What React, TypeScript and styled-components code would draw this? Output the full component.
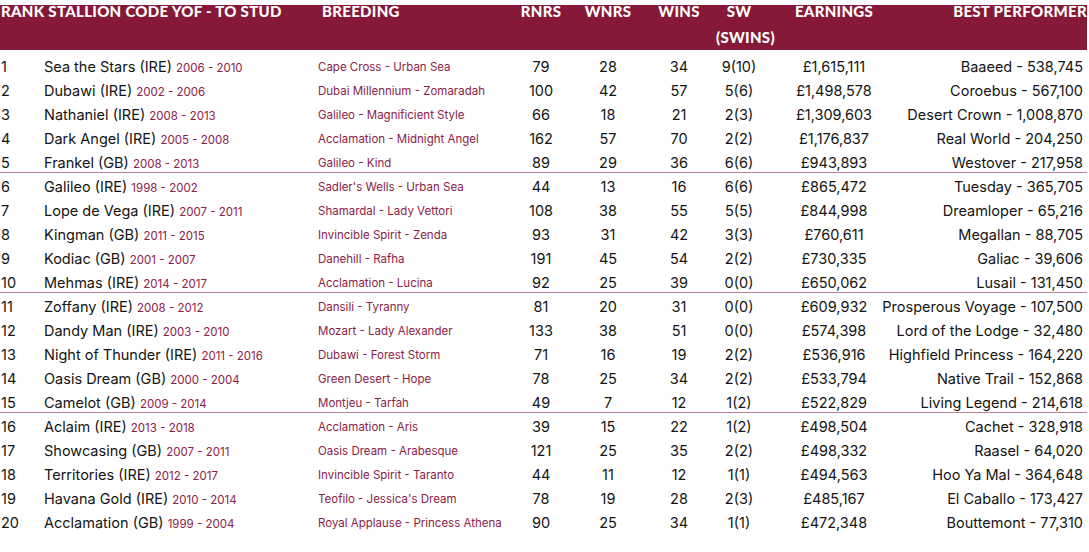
import styled, {createGlobalStyle} from 'styled-components';

const GlobalStyle = createGlobalStyle`
    body {
        margin: 0;
        background: #ffffff;
        font-family: Inter, Lato, sans-serif;
    }
`;

const maroon = '#861838';
const columns = '44px 274px 190px 66px 68px 74px 46px 144px 181px';

interface Stallion {
    rank: number;
    name: string;
    years: string;
    breeding: string;
    runners: number;
    winners: number;
    wins: number;
    sw: string;
    earnings: string;
    best: string;
}

const stallions: Stallion[] = [
    {rank: 1, name: 'Sea the Stars (IRE)', years: '2006 - 2010', breeding: 'Cape Cross - Urban Sea', runners: 79, winners: 28, wins: 34, sw: '9(10)', earnings: '£1,615,111', best: 'Baaeed - 538,745'},
    {rank: 2, name: 'Dubawi (IRE)', years: '2002 - 2006', breeding: 'Dubai Millennium - Zomaradah', runners: 100, winners: 42, wins: 57, sw: '5(6)', earnings: '£1,498,578', best: 'Coroebus - 567,100'},
    {rank: 3, name: 'Nathaniel (IRE)', years: '2008 - 2013', breeding: 'Galileo - Magnificient Style', runners: 66, winners: 18, wins: 21, sw: '2(3)', earnings: '£1,309,603', best: 'Desert Crown - 1,008,870'},
    {rank: 4, name: 'Dark Angel (IRE)', years: '2005 - 2008', breeding: 'Acclamation - Midnight Angel', runners: 162, winners: 57, wins: 70, sw: '2(2)', earnings: '£1,176,837', best: 'Real World - 204,250'},
    {rank: 5, name: 'Frankel (GB)', years: '2008 - 2013', breeding: 'Galileo - Kind', runners: 89, winners: 29, wins: 36, sw: '6(6)', earnings: '£943,893', best: 'Westover - 217,958'},
    {rank: 6, name: 'Galileo (IRE)', years: '1998 - 2002', breeding: "Sadler's Wells - Urban Sea", runners: 44, winners: 13, wins: 16, sw: '6(6)', earnings: '£865,472', best: 'Tuesday - 365,705'},
    {rank: 7, name: 'Lope de Vega (IRE)', years: '2007 - 2011', breeding: 'Shamardal - Lady Vettori', runners: 108, winners: 38, wins: 55, sw: '5(5)', earnings: '£844,998', best: 'Dreamloper - 65,216'},
    {rank: 8, name: 'Kingman (GB)', years: '2011 - 2015', breeding: 'Invincible Spirit - Zenda', runners: 93, winners: 31, wins: 42, sw: '3(3)', earnings: '£760,611', best: 'Megallan - 88,705'},
    {rank: 9, name: 'Kodiac (GB)', years: '2001 - 2007', breeding: 'Danehill - Rafha', runners: 191, winners: 45, wins: 54, sw: '2(2)', earnings: '£730,335', best: 'Galiac - 39,606'},
    {rank: 10, name: 'Mehmas (IRE)', years: '2014 - 2017', breeding: 'Acclamation - Lucina', runners: 92, winners: 25, wins: 39, sw: '0(0)', earnings: '£650,062', best: 'Lusail - 131,450'},
    {rank: 11, name: 'Zoffany (IRE)', years: '2008 - 2012', breeding: 'Dansili - Tyranny', runners: 81, winners: 20, wins: 31, sw: '0(0)', earnings: '£609,932', best: 'Prosperous Voyage - 107,500'},
    {rank: 12, name: 'Dandy Man (IRE)', years: '2003 - 2010', breeding: 'Mozart - Lady Alexander', runners: 133, winners: 38, wins: 51, sw: '0(0)', earnings: '£574,398', best: 'Lord of the Lodge - 32,480'},
    {rank: 13, name: 'Night of Thunder (IRE)', years: '2011 - 2016', breeding: 'Dubawi - Forest Storm', runners: 71, winners: 16, wins: 19, sw: '2(2)', earnings: '£536,916', best: 'Highfield Princess - 164,220'},
    {rank: 14, name: 'Oasis Dream (GB)', years: '2000 - 2004', breeding: 'Green Desert - Hope', runners: 78, winners: 25, wins: 34, sw: '2(2)', earnings: '£533,794', best: 'Native Trail - 152,868'},
    {rank: 15, name: 'Camelot (GB)', years: '2009 - 2014', breeding: 'Montjeu - Tarfah', runners: 49, winners: 7, wins: 12, sw: '1(2)', earnings: '£522,829', best: 'Living Legend - 214,618'},
    {rank: 16, name: 'Aclaim (IRE)', years: '2013 - 2018', breeding: 'Acclamation - Aris', runners: 39, winners: 15, wins: 22, sw: '1(2)', earnings: '£498,504', best: 'Cachet - 328,918'},
    {rank: 17, name: 'Showcasing (GB)', years: '2007 - 2011', breeding: 'Oasis Dream - Arabesque', runners: 121, winners: 25, wins: 35, sw: '2(2)', earnings: '£498,332', best: 'Raasel - 64,020'},
    {rank: 18, name: 'Territories (IRE)', years: '2012 - 2017', breeding: 'Invincible Spirit - Taranto', runners: 44, winners: 11, wins: 12, sw: '1(1)', earnings: '£494,563', best: 'Hoo Ya Mal - 364,648'},
    {rank: 19, name: 'Havana Gold (IRE)', years: '2010 - 2014', breeding: "Teofilo - Jessica's Dream", runners: 78, winners: 19, wins: 28, sw: '2(3)', earnings: '£485,167', best: 'El Caballo - 173,427'},
    {rank: 20, name: 'Acclamation (GB)', years: '1999 - 2004', breeding: 'Royal Applause - Princess Athena', runners: 90, winners: 25, wins: 34, sw: '1(1)', earnings: '£472,348', best: 'Bouttemont - 77,310'},
];

const Page = styled.div`
    width: 1087px;
    padding-right: 2px;
`;

const HeaderRow = styled.div`
    display: grid;
    grid-template-columns: ${columns};
    height: 50px;
    background: linear-gradient(to bottom, #ffffff 5px, ${maroon} 5px);
    color: #ffffff;
    font-family: Lato, sans-serif;
    font-weight: 900;
    font-size: 15px;
    letter-spacing: 0.3px;
    text-transform: uppercase;
    overflow: hidden;
`;

const HeaderCell = styled.div<{ $align?: 'left' | 'center' | 'right'; $span?: number }>`
    margin-top: -2px;
    line-height: 26px;
    white-space: nowrap;
    text-align: ${({$align}) => $align ?? 'center'};
    grid-column: span ${({$span}) => $span ?? 1};
    padding-left: ${({$align}) => ($align === 'left' ? '1px' : '0')};
`;

const BreedingHead = styled(HeaderCell)`
    padding-left: 4px;
`;

const Body = styled.div`
    padding-top: 5px;
`;

const Group = styled.div<{ $divided: boolean }>`
    border-bottom: ${({$divided}) => ($divided ? `1px solid rgba(134, 24, 56, 0.55)` : 'none')};
    margin-bottom: 2px;
`;

const Row = styled.div`
    display: grid;
    grid-template-columns: ${columns};
    height: 24px;
    line-height: 24px;
    font-size: 14.5px;
    color: #141414;
    white-space: nowrap;
    font-variant-numeric: proportional-nums;

    &:last-child {
        margin-bottom: -3px;
    }
`;

const RankCell = styled.div`
    padding-left: 1px;
`;

const NameCell = styled.div`
    overflow: visible;
`;

const Years = styled.span`
    font-size: 11.5px;
    color: #8c2147;
`;

const Breeding = styled.div`
    font-size: 11.5px;
    color: #8c2147;
`;

const NumCell = styled.div`
    text-align: center;
`;

const BestCell = styled.div`
    display: flex;
    justify-content: flex-end;
    padding-right: 4px;
`;

const groups = [0, 1, 2, 3].map((g) => stallions.slice(g * 5, g * 5 + 5));

export default function App() {
    return (
        <Page>
            <GlobalStyle/>
            <HeaderRow>
                <HeaderCell $align="left" $span={2}>Rank Stallion Code YOF - To Stud</HeaderCell>
                <BreedingHead $align="left">Breeding</BreedingHead>
                <HeaderCell>Rnrs</HeaderCell>
                <HeaderCell>Wnrs</HeaderCell>
                <HeaderCell>Wins</HeaderCell>
                <HeaderCell>SW<br/>(SWINS)</HeaderCell>
                <HeaderCell>Earnings</HeaderCell>
                <HeaderCell $align="right">Best Performer</HeaderCell>
            </HeaderRow>
            <Body>
                {groups.map((group, i) => (
                    <Group key={i} $divided={i < groups.length - 1}>
                        {group.map((s) => (
                            <Row key={s.rank}>
                                <RankCell>{s.rank}</RankCell>
                                <NameCell>{s.name} <Years>{s.years}</Years></NameCell>
                                <Breeding>{s.breeding}</Breeding>
                                <NumCell>{s.runners}</NumCell>
                                <NumCell>{s.winners}</NumCell>
                                <NumCell>{s.wins}</NumCell>
                                <NumCell>{s.sw}</NumCell>
                                <NumCell>{s.earnings}</NumCell>
                                <BestCell>{s.best}</BestCell>
                            </Row>
                        ))}
                    </Group>
                ))}
            </Body>
        </Page>
    );
}
